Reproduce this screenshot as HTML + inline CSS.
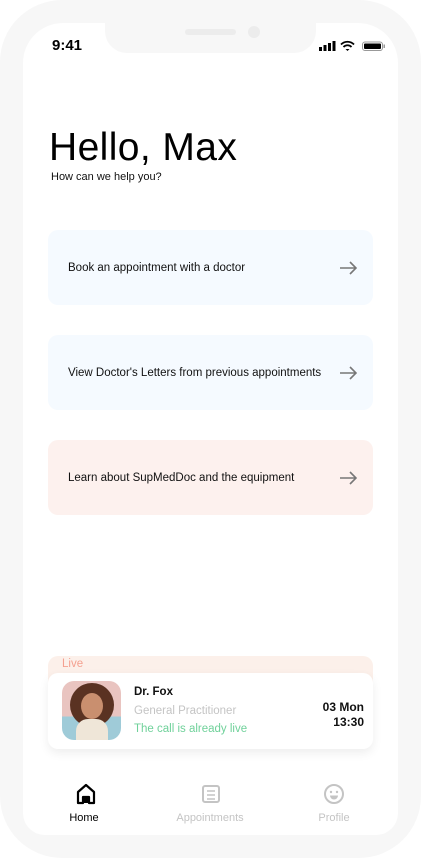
<!DOCTYPE html>
<html><head><meta charset="utf-8"><style>
*{margin:0;padding:0;box-sizing:border-box}
body{width:421px;height:858px;background:#fff;font-family:"Liberation Sans",sans-serif;position:relative;overflow:hidden}
.frame{position:absolute;left:0;top:0;width:421px;height:858px;border-radius:62px;background:#f7f7f7}
.screen{position:absolute;left:23px;top:23px;width:375px;height:812px;border-radius:40px;background:#fff}
.notch{position:absolute;left:105px;top:18px;width:211px;height:35px;background:#f7f7f7;border-radius:0 0 22px 22px}
.spk{position:absolute;left:185px;top:29px;width:51px;height:6px;border-radius:3px;background:#ececec}
.cam{position:absolute;left:248px;top:26px;width:12px;height:12px;border-radius:50%;background:#ececec}
.abs{position:absolute}
.card{position:absolute;left:48px;width:325px;height:75px;border-radius:10px;font-size:11.5px;color:#111;padding-left:20px;line-height:77px}
.arrow{position:absolute;right:16px;top:31px}
.nav{position:absolute;left:23px;top:771px;width:375px;height:64px;background:#fff;border-radius:22px}
.nl{position:absolute;font-size:11px;top:41px;text-align:center;width:100px}
</style></head><body>
<div class="frame"></div>
<div class="screen"></div>
<div class="notch"></div>
<div class="spk"></div><div class="cam"></div>
<div class="abs" style="left:52px;top:37px;font-size:15px;font-weight:bold">9:41</div>
<svg class="abs" style="left:318px;top:40px" width="70" height="12" viewBox="0 0 70 12">
<rect x="1" y="7" width="3" height="4" fill="#000"/><rect x="5.5" y="5" width="3" height="6" fill="#000"/><rect x="10" y="3" width="3" height="8" fill="#000"/><rect x="14.5" y="1" width="3" height="10" fill="#000"/>
<path d="M23 4.5 A9 9 0 0 1 36 4.5 M25.5 7 A5.5 5.5 0 0 1 33.5 7" stroke="#000" stroke-width="1.8" fill="none"/><path d="M27.5 9 L29.5 11 L31.5 9 Z" fill="#000"/>
<rect x="44.5" y="2" width="20" height="8.5" rx="2.5" fill="none" stroke="#999" stroke-width="1"/><rect x="46" y="3.5" width="17" height="5.5" rx="1" fill="#000"/><rect x="65.5" y="4.5" width="1.5" height="3.5" fill="#999"/>
</svg>
<div class="abs" style="left:49px;top:126px;font-size:39px;letter-spacing:0.4px;color:#000">Hello, Max</div>
<div class="abs" style="left:51px;top:171px;font-size:11px;color:#111">How can we help you?</div>
<div class="card" style="top:230px;background:#f5faff">Book an appointment with a doctor<svg class="arrow" width="18" height="14" viewBox="0 0 18 14"><path d="M1 7H17M11 1L17 7L11 13" stroke="#777" stroke-width="1.6" fill="none"/></svg></div>
<div class="card" style="top:335px;background:#f5faff">View Doctor's Letters from previous appointments<svg class="arrow" width="18" height="14" viewBox="0 0 18 14"><path d="M1 7H17M11 1L17 7L11 13" stroke="#777" stroke-width="1.6" fill="none"/></svg></div>
<div class="card" style="top:440px;background:#fdf1ee">Learn about SupMedDoc and the equipment<svg class="arrow" width="18" height="14" viewBox="0 0 18 14"><path d="M1 7H17M11 1L17 7L11 13" stroke="#777" stroke-width="1.6" fill="none"/></svg></div>
<div class="abs" style="left:48px;top:656px;width:325px;height:40px;background:#fcf0ea;border-radius:10px"></div>
<div class="abs" style="left:62px;top:658px;font-size:11.5px;color:#f4a090">Live</div>
<div class="abs" style="left:48px;top:673px;width:325px;height:76px;background:#fff;border-radius:10px;box-shadow:0 4px 10px rgba(0,0,0,0.07)"></div>
<div class="abs" style="left:62px;top:681px;width:59px;height:59px;border-radius:12px;overflow:hidden;background:linear-gradient(#e9c4c0 0 60%,#9fcbd8 60%)">
<div class="abs" style="left:8px;top:2px;width:44px;height:44px;border-radius:50%;background:#5a3222"></div>
<div class="abs" style="left:19px;top:12px;width:22px;height:26px;border-radius:50%;background:#c98f6f"></div>
<div class="abs" style="left:14px;top:38px;width:32px;height:24px;border-radius:12px 12px 0 0;background:#efe6d8"></div>
</div>
<div class="abs" style="left:134px;top:686px;font-size:11.5px;font-weight:bold;color:#111">Dr. Fox</div>
<div class="abs" style="left:134px;top:705px;font-size:11.5px;color:#c4c4c4">General Practitioner</div>
<div class="abs" style="left:134px;top:723px;font-size:11.5px;color:#6fd19a">The call is already live</div>
<div class="abs" style="left:300px;top:700px;width:64px;text-align:right;font-size:12px;font-weight:bold;line-height:15px;color:#111">03 Mon<br>13:30</div>
<div class="nav">
<svg class="abs" style="left:52px;top:12px" width="22" height="22" viewBox="0 0 22 22"><path d="M3 20V9L11 2L19 9V20H14V14H8V20Z" fill="none" stroke="#000" stroke-width="2.2" stroke-linejoin="round"/><rect x="8" y="14" width="6" height="6" fill="#000"/></svg>
<div class="nl" style="left:11px">Home</div>
<svg class="abs" style="left:178px;top:13px" width="20" height="20" viewBox="0 0 20 20"><rect x="2" y="2" width="16" height="16" rx="2" fill="none" stroke="#c4c4c4" stroke-width="2"/><path d="M6 7H14M6 11H14M6 15H14" stroke="#c4c4c4" stroke-width="1.6"/></svg>
<div class="nl" style="left:137px;color:#c4c4c4">Appointments</div>
<svg class="abs" style="left:300px;top:12px" width="22" height="22" viewBox="0 0 22 22"><circle cx="11" cy="11" r="9" fill="none" stroke="#c4c4c4" stroke-width="2"/><circle cx="8" cy="9" r="1.2" fill="#c4c4c4"/><circle cx="14" cy="9" r="1.2" fill="#c4c4c4"/><path d="M7 12.5H15A4 4 0 0 1 7 12.5Z" fill="#c4c4c4"/></svg>
<div class="nl" style="left:261px;color:#c4c4c4">Profile</div>
</div>
</body></html>
